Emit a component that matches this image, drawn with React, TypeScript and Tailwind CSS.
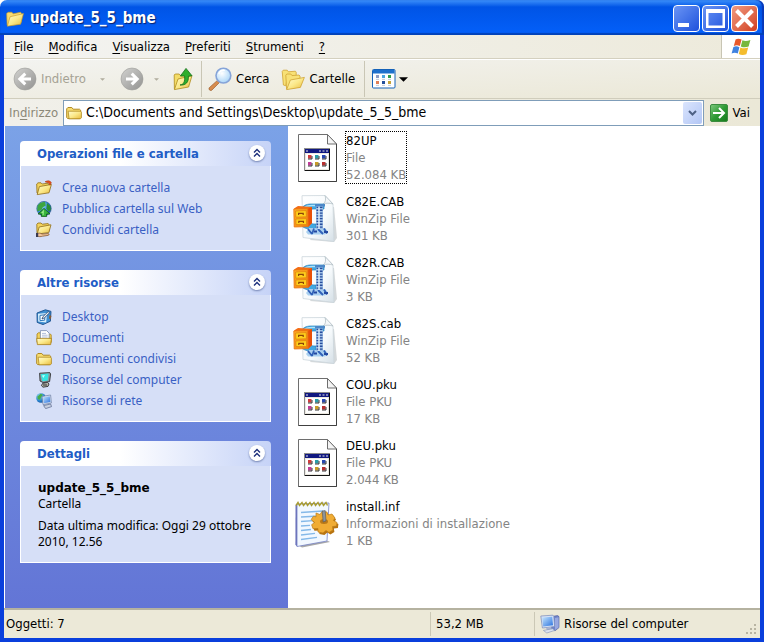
import type { ReactNode } from "react";

const menuItems = ["File", "Modifica", "Visualizza", "Preferiti", "Strumenti", "?"];

const files = [
  { name: "82UP", type: "File", size: "52.084 KB", icon: "app", focused: true },
  { name: "C82E.CAB", type: "WinZip File", size: "301 KB", icon: "zip" },
  { name: "C82R.CAB", type: "WinZip File", size: "3 KB", icon: "zip" },
  { name: "C82S.cab", type: "WinZip File", size: "52 KB", icon: "zip" },
  { name: "COU.pku", type: "File PKU", size: "17 KB", icon: "app" },
  { name: "DEU.pku", type: "File PKU", size: "2.044 KB", icon: "app" },
  { name: "install.inf", type: "Informazioni di installazione", size: "1 KB", icon: "inf" },
];

/* ---------- Shared gradients ---------- */

function Defs() {
  return (
    <svg className="absolute size-0" aria-hidden="true">
      <defs>
        <linearGradient id="folder" x1="0" y1="0" x2="1" y2="1">
          <stop offset="0" stopColor="#fffbd0" />
          <stop offset="0.5" stopColor="#fbe98a" />
          <stop offset="1" stopColor="#e8b93c" />
        </linearGradient>
        <linearGradient id="gray" x1="0" y1="0" x2="1" y2="1">
          <stop offset="0" stopColor="#d2d2d0" />
          <stop offset="1" stopColor="#929290" />
        </linearGradient>
        <linearGradient id="green" x1="0" y1="0" x2="1" y2="1">
          <stop offset="0" stopColor="#7fc97f" />
          <stop offset="0.5" stopColor="#2f9a35" />
          <stop offset="1" stopColor="#157a1c" />
        </linearGradient>
        <linearGradient id="screen" x1="0" y1="0" x2="1" y2="1">
          <stop offset="0" stopColor="#c5e6ff" />
          <stop offset="1" stopColor="#2b72dd" />
        </linearGradient>
        <linearGradient id="drawer" x1="0" y1="0" x2="1" y2="1">
          <stop offset="0" stopColor="#ffb02c" />
          <stop offset="1" stopColor="#f27c08" />
        </linearGradient>
        <linearGradient id="paper" x1="0" y1="0" x2="1" y2="1">
          <stop offset="0" stopColor="#ffffff" />
          <stop offset="0.6" stopColor="#f6fafc" />
          <stop offset="1" stopColor="#d5dfe6" />
        </linearGradient>
        <radialGradient id="lens" cx="0.4" cy="0.35" r="0.7">
          <stop offset="0" stopColor="#ffffff" />
          <stop offset="1" stopColor="#a5d3f7" />
        </radialGradient>
        <radialGradient id="globe" cx="0.35" cy="0.3" r="0.8">
          <stop offset="0" stopColor="#9adcf5" />
          <stop offset="0.6" stopColor="#2a86d0" />
          <stop offset="1" stopColor="#144a98" />
        </radialGradient>
      </defs>
    </svg>
  );
}

/* ---------- Small icons ---------- */

function OpenFolderIcon({ className = "size-4" }) {
  return (
    <svg viewBox="0 0 16 16" className={className}>
      <path d="M1 13.5 0.6 3.2 1.8 2h3.4l1.2 1.4 6.6-1.4.8 1.2-.4 8z" fill="#f8dc70" stroke="#c89a28" strokeWidth="0.6" />
      <path d="M3.6 6 15.5 3.2 13 12.6 1.2 14.4z" fill="url(#folder)" stroke="#c89a28" strokeWidth="0.6" />
    </svg>
  );
}

function ClosedFolderIcon() {
  return (
    <svg viewBox="0 0 16 16" className="size-4">
      <path d="M.7 12.6V3.8L1.9 2.5h3.9l1.4 1.7h6.3l1.2 1.1v7.3l-1 1H1.8z" fill="#f7dc70" stroke="#a87f14" strokeWidth="0.9" />
      <path d="M2.2 6.2h12.4l.8 1v5.6l-1 1H3z" fill="url(#folder)" stroke="#a87f14" strokeWidth="0.7" />
    </svg>
  );
}

function NewFolderIcon() {
  return (
    <svg viewBox="0 0 16 16" className="size-4">
      <path d="M1 13 .7 4 2 2.8h3l1.2 1.2 5.6-.8.9 1.2v7z" fill="#f3d35c" stroke="#8f6c16" strokeWidth="0.8" />
      <path d="M3.4 6.6 15.4 4.4 13 12.8 1.2 14.6z" fill="url(#folder)" stroke="#8f6c16" strokeWidth="0.8" />
      <path d="M9 1.8c2.6-1.6 5-1.2 6.4.8l-1.4 2.6-1.4-2.2z" fill="#e2511e" stroke="#a8320c" strokeWidth="0.5" />
    </svg>
  );
}

function WebPublishIcon() {
  return (
    <svg viewBox="0 0 16 16" className="size-4">
      <circle cx="8" cy="7.6" r="7.2" fill="url(#globe)" stroke="#164a80" strokeWidth="0.6" />
      <path d="M1.6 4.8C3 2 6 .8 9 1l.8 3.4-3 1.8-1.4 3-4.2 1z" fill="#3da53f" />
      <path d="m11 2 3.4 3 .4 4-2.4 1.6-2-3z" fill="#2b8e34" />
      <path d="M8 7.4 14 13h-3.4v2.6H5.4V13H2z" fill="#38b53c" stroke="#0d5a17" strokeWidth="0.8" />
      <path d="M8 8.6 5 12h1.6v2h1z" fill="#9be88d" />
    </svg>
  );
}

function ShareFolderIcon() {
  return (
    <svg viewBox="0 0 16 16" className="size-4">
      <path d="M1 11 .8 2.2 2 1h3l1.2 1.2 6-.6.7 1v7z" fill="#f3d35c" stroke="#8f6c16" strokeWidth="0.8" />
      <path d="M3.2 5 15 2.8l-2.2 7.8L1.2 12z" fill="url(#folder)" stroke="#8f6c16" strokeWidth="0.8" />
      <path d="M1 11.6c2-.8 3.4-.6 5 .4l6-.4c1.4 0 1.4 1.6 0 1.8l-5.4.8c-2 .6-3.6.6-5.6-.2z" fill="#f0c49a" stroke="#7a4a20" strokeWidth="0.7" />
      <path d="M0 11h2.2v4H0z" fill="#3a3a50" />
    </svg>
  );
}

function DesktopIcon() {
  return (
    <svg viewBox="0 0 16 16" className="size-4">
      <path d="m1 4 8.4-3.2 5.6 1.6-.6 9.8L7 15.6 1.2 13.4z" fill="#3f8fd2" stroke="#1a4f8c" strokeWidth="0.9" />
      <path d="m2 4.8 9-.8-.8 9.4-8-.8z" fill="#d8effc" />
      <path d="m4 6.4 5-.6-.4 5.4-4.6.4z" fill="#fff" stroke="#2f78ba" strokeWidth="1" />
      <path d="m6 10 1-2.4 5.2-5 1.4 1.2-5.2 5z" fill="#f0f6fb" stroke="#233c66" strokeWidth="0.8" />
      <path d="m13.6 6 1.8 1-.8 3.2-1.6-.6z" fill="#8a5a34" />
    </svg>
  );
}

function DocumentsIcon() {
  return (
    <svg viewBox="0 0 16 16" className="size-4">
      <path d="M1 12.4V4l1.4-1.2h3L6.6 4h7.8l.8 1v7.4z" fill="#f3d35c" stroke="#a87f14" strokeWidth="0.8" />
      <path d="M4.4.6h6.2l2.6 2.6v7.4H4.4z" fill="#fff" stroke="#7388b0" strokeWidth="0.8" />
      <path d="M6 3.4h4M6 5.2h5.6M6 7h5.6" stroke="#8fa4cc" strokeWidth="0.7" />
      <path d="M.7 8.4h14.8l-.8 6.2H1.4z" fill="url(#folder)" stroke="#a87f14" strokeWidth="0.8" />
    </svg>
  );
}

function MyComputerIcon() {
  return (
    <svg viewBox="0 0 16 16" className="size-4">
      <path d="M3.6 1.2 13.8.6l.8 1.4-1 7.6-6.4 1L4 9z" fill="#8e9aa0" stroke="#222" strokeWidth="0.8" />
      <path d="m4.6 2.2 8-.6-.8 6.8-5.4.8z" fill="#35e5e2" />
      <path d="m6 3.4 3-.4-1.6 3z" fill="#c4fffb" />
      <path d="m6.6 11.4 5-1 1.4 1.6-1 2.4-5 .8-1.6-1.6z" fill="#b6b6ac" stroke="#222" strokeWidth="0.8" />
      <path d="M7 13h4" stroke="#222" strokeWidth="0.9" />
    </svg>
  );
}

function NetworkIcon() {
  return (
    <svg viewBox="0 0 16 16" className="size-4">
      <circle cx="5" cy="5" r="4.8" fill="url(#globe)" />
      <path d="M1.4 3.4 4.6.8l2.4 1-2 2.4-.8 2.6-2.4-.6z" fill="#46ae48" />
      <path d="M6 3.4 14.6 2l.8 8-8.4 1.6z" fill="#d9e2f0" stroke="#6a7ca4" strokeWidth="0.7" />
      <path d="m7 4.2 6.8-1 .6 5.8-6.6 1.2z" fill="url(#screen)" />
      <path d="m7.6 12.6 7-1.6 1 2.6-6 2z" fill="#c8d0e0" stroke="#56658c" strokeWidth="0.7" />
    </svg>
  );
}

function StatusComputerIcon() {
  return (
    <svg viewBox="0 0 20 20" className="size-5">
      <path d="m12 2.4 5.6-.8 1.4 1v11l-4 3.2-3.4-1.4z" fill="#6f83c8" stroke="#45559c" strokeWidth="0.6" />
      <path d="m15 4 3.6-.8v10.2L15 16z" fill="#98a8e0" />
      <path d="m.8 2 12-.8 1 1.2.8 10.2L2.4 14z" fill="#d6e2f6" stroke="#7688b8" strokeWidth="0.7" />
      <path d="m2.2 3.4 10-.6.8 8.4-9.8 1.2z" fill="url(#screen)" />
      <path d="m6 14 5-.8 1 2.4-4.8 1z" fill="#a8b4d4" />
      <path d="m3.4 16.4 9.4-1.6 2 1.6-8 2.6z" fill="#dde3f0" stroke="#8090b4" strokeWidth="0.6" />
    </svg>
  );
}

/* ---------- Toolbar icons ---------- */

function RoundArrowIcon({ back = false }) {
  return (
    <svg viewBox="0 0 24 24" className="size-6">
      <circle cx="12" cy="12" r="11" fill="url(#gray)" stroke="#9c9c98" strokeWidth="0.6" />
      <path
        d={back ? "M18 12H7.5M12.3 6.6 6.8 12l5.5 5.4" : "M6 12h10.5M11.7 6.6l5.5 5.4-5.5 5.4"}
        fill="none"
        stroke="#fff"
        strokeWidth="3"
      />
    </svg>
  );
}

function UpFolderIcon() {
  return (
    <svg viewBox="0 0 20 24" className="h-6 w-5">
      <path d="M1.4 22 1.2 8l1-1h4l1.2 1.4h7.2l.8 1v9z" fill="#f3dc68" stroke="#b08c1c" strokeWidth="0.8" />
      <path d="M5 12 19 8.6 15.6 20 1.4 22.6z" fill="url(#folder)" stroke="#b08c1c" strokeWidth="0.8" />
      <path d="M7 18c4-.6 5-3.4 4.6-9H7.4L13 1.4l6 7.4-3.6.4c.4 6-2.6 9.4-8.4 8.8z" fill="#2eae2c" stroke="#14701a" strokeWidth="0.8" />
    </svg>
  );
}

function SearchIcon() {
  return (
    <svg viewBox="0 0 24 24" className="size-6">
      <path d="m9.4 13.4 2 2.2-7.6 7.6c-1.6 1-3.6-.8-2.6-2.4z" fill="#d88c4c" stroke="#9c6034" strokeWidth="0.7" />
      <circle cx="15.4" cy="8.6" r="7.4" fill="url(#lens)" stroke="#86a4d8" strokeWidth="1.6" />
      <path d="M10.8 7c1-3 3.6-4.2 6-3.6" fill="none" stroke="#fff" strokeWidth="1.4" />
    </svg>
  );
}

function FoldersIcon() {
  return (
    <svg viewBox="0 0 24 24" className="size-6">
      <path d="M2.4 18 1.2 4.4l1-1.2h4l1.2 1.6 7-.6.8 1v4l-9 2.2-1.4 7.4z" fill="#f8e176" stroke="#d0a434" strokeWidth="0.8" />
      <path d="m5.6 22-.8-13.8 1-1.2h4l1.2 1.6 7-.6 1 1v11z" fill="#f8e176" stroke="#d0a434" strokeWidth="0.8" />
      <path d="M9.4 13 23.4 10.4 19.4 20.4 5.6 22.6z" fill="url(#folder)" stroke="#d0a434" strokeWidth="0.8" />
    </svg>
  );
}

function ViewsIcon() {
  return (
    <svg viewBox="0 0 24 20" className="h-5 w-6">
      <rect x="0.5" y="0.5" width="22.5" height="18.5" rx="1" fill="#fff" stroke="#1562b8" />
      <rect x="1" y="1" width="21.5" height="3.5" fill="#1e70cc" />
      <rect x="4" y="6" width="3" height="3" fill="#8c9cc4" />
      <rect x="10" y="6" width="3" height="3" fill="#4aa4e0" />
      <rect x="16" y="6" width="3" height="3" fill="#2f9c4c" />
      <rect x="4" y="12" width="3" height="3" fill="#e08058" />
      <rect x="10" y="12" width="3" height="3" fill="#24509c" />
      <rect x="16" y="12" width="3" height="3" fill="#c4a238" />
      <path d="M4 10.4h3M10 10.4h3M16 10.4h3M4 16.4h3M10 16.4h3M16 16.4h3" stroke="#bcc4d4" strokeWidth="0.9" />
    </svg>
  );
}

function WindowsFlag() {
  return (
    <svg viewBox="0 0 20 18" className="h-[18px] w-5">
      <path d="M4.6 1.4c2-1 4-.8 6 .2L8.8 8C6.8 7 5 7 2.8 8z" fill="#e8582a" />
      <path d="M11.4 2.2c2.2 1 4.6 1 8-.2l-1.8 6.6c-2.8 1-5.2 1-7.8-.2z" fill="#78b83c" />
      <path d="M2.4 9c2.2-1 4-.8 6 .2l-1.6 6.4c-2-1.2-4-1.2-6.2-.2z" fill="#3f82e0" />
      <path d="M9.4 9.4c2.4 1.2 4.8 1.2 7.8.2L15.4 16.2c-2.8 1-5.2 1-7.6-.2z" fill="#f4bc2c" />
    </svg>
  );
}

function GoIcon() {
  return (
    <svg viewBox="0 0 18 18" className="size-[18px]">
      <rect x="0.5" y="0.5" width="17" height="17" rx="1.5" fill="url(#green)" stroke="#3c8c40" />
      <path d="M3 9h10.6M9 4l5 5-5 5" fill="none" stroke="#fff" strokeWidth="2" />
    </svg>
  );
}

function SmallArrow({ className = "" }) {
  return (
    <svg viewBox="0 0 10 5" className={className}>
      <path d="M0 0h10L5 5z" fill="currentColor" />
    </svg>
  );
}

/* ---------- File icons ---------- */

function AppFileIcon() {
  const dots = ["#d03c3c", "#2a9ca8", "#2848b0", "#c03c98", "#c89c28", "#b83030"];
  return (
    <svg viewBox="0 0 48 48" className="size-12">
      <path d="M5.5.5h29L43.5 10v37.5h-38z" fill="#fff" stroke="#6e6e6e" />
      <path d="M34.5.5V10h9z" fill="#f4f4f4" stroke="#6e6e6e" />
      <path d="M43.5 10v37.5h-38" fill="none" stroke="#404040" />
      <rect x="11.5" y="14.5" width="25" height="22" fill="#ece9e0" stroke="#8c8c8c" />
      <path d="M36.5 15v21.500H12" fill="none" stroke="#111" />
      <rect x="12" y="15" width="24" height="4" fill="#101880" />
      <path d="M13 17h2M26 17h2M29.5 17h2M33 17h2" stroke="#e8e8e8" />
      <rect x="13" y="20" width="22" height="15" fill="#fff" />
      {dots.map((color, i) => (
        <g key={color}>
          <rect x={15 + (i % 3) * 7} y={21 + Math.floor(i / 3) * 7} width="3.5" height="3.5" fill={color} />
          <path d={`M${15 + (i % 3) * 7} ${25 + Math.floor(i / 3) * 7}h4v-3`} fill="none" stroke="#222" strokeWidth="0.9" />
        </g>
      ))}
    </svg>
  );
}

function ZipFileIcon() {
  return (
    <svg viewBox="0 0 48 48" className="size-12">
      <path d="m37 12 4 0 3 31-3 4-24-2z" fill="#c3c9cc" opacity="0.7" />
      <path d="M9 .7 32 .5l8 8.5 1 37.5-31-4z" fill="url(#paper)" stroke="#ccd6dc" strokeWidth="0.8" />
      <path d="M32 .5c1.2 3.5.6 6.500-1.600 8.500 3-1.200 6-1 9.600 0z" fill="#f4f7f9" stroke="#b4c0c6" strokeWidth="0.8" />
      {/* clamp frame */}
      <path d="M8 15c1-4 5-6 10-6h13v5H20c-2 0-3 1-3 3v9c0 2 1 3 4 3h2v5h-5c-6 0-10-2-10-7z" fill="#42a8e0" stroke="#2684c0" strokeWidth="0.7" />
      <path d="M11 13c2-2 5-2.5 8-2.5h10" fill="none" stroke="#aee2fa" strokeWidth="1.5" />
      {/* screw and press plates */}
      <path d="M16 33h16l3 3.5-3 3H15l-2-2.5z" fill="#a8cff0" />
      <path d="m15 34 4 5M21 33.5l-2 5.5M25 34l5 5M31 33.5l3 5" stroke="#3060b8" strokeWidth="1.8" />
      <path d="M21 36.5h3M31 37h4" stroke="#2448a0" strokeWidth="2" />
      <path d="M26.5 9v25" stroke="#9fc0e6" strokeWidth="7" />
      <path d="M26.5 9v25" stroke="#284c9c" strokeWidth="6" strokeDasharray="1.3 1.5" />
      <path d="M26 10v24" stroke="#dcecfa" strokeWidth="1.5" />
      <path d="M22 9h10v2.5H22z" fill="#4c88c8" />
      {/* drawer */}
      <path d="m1 13.5 4-2.5 14 1v16l-3 3z" fill="#f46c14" />
      <path d="m14.5 14 4.5-2v16l-4 4z" fill="#e85008" />
      <path d="m.8 14 14-.6.4 18.2L1.2 32z" fill="url(#drawer)" stroke="#e87410" strokeWidth="0.8" />
      <path d="m2.6 16 10.6-.4.2 6.2-10.6.4zM2.8 24l10.6-.4.2 6H3z" fill="#ffd01c" stroke="#e08410" strokeWidth="0.8" />
      <path d="M5.6 20v-1.6h4.6V20M5.8 28v-1.6h4.6V28" fill="none" stroke="#8c4408" strokeWidth="1.2" />
    </svg>
  );
}

function InfFileIcon() {
  return (
    <svg viewBox="0 0 48 48" className="size-12">
      <path d="m5 45 30-4 2 1-28 5.5z" fill="#a8a8a8" />
      <path d="m4 4 32-1-2 38-30 5.5z" fill="#f2f8ff" stroke="#7480c4" strokeWidth="0.8" />
      <path d="M4 4v42.5l-1.600-1.700L2.500 5z" fill="#6c74bc" />
      <path d="M8 12.500 30 11M8 17l18-1M8 21.500l12-.8M8 26l9-.7M8 30.500l10-1M8 35l14-1.600M8 39.500l16-2.200" stroke="#84b8e8" strokeWidth="1.3" />
      <path d="m3 5.500 2-3 1.500 3 2.500-3 1.500 3 2.500-3 1.500 3 2.500-3 1.500 3 2.500-3 1.500 3 2.500-3 1.500 3 2.500-3 1.500 3 2.500-3 1.500 3" fill="none" stroke="#a89c30" strokeWidth="1.4" />
      <path d="m24 15 4 1 2-3 5 .5 1 3 4-1 3 4-1.600 2.500 4 2-.5 4-4 .6.500 3.400-4 2.500-3-2-3 2.500-5-1v-3.500l-5 .2-1.400-4 3-2.200-3.500-3 2.500-3.400 3 .8z" fill="#b87410" />
      <path d="m23 13 4 1.500 2-3 5 .5 1 3 4-1 3 4-1.600 2.500 3.600 2-.5 3.500-4 .6.500 3.400-4 2.500-3-2-3 2.500-5-1v-3.500l-5 .2-1.400-4 3-2.200-3.500-3 2.500-3.400 2.400.8z" fill="#f0ac34" stroke="#bc7c18" strokeWidth="0.7" />
      <ellipse cx="31" cy="21.5" rx="4" ry="2.5" fill="#b87818" />
      <path d="m29.2 11 3-.4.8 10.2-2.8 1.2z" fill="#8c949c" stroke="#50565c" strokeWidth="0.6" />
    </svg>
  );
}

function FileIcon({ kind }: { kind: string }) {
  if (kind === "zip") return <ZipFileIcon />;
  if (kind === "inf") return <InfFileIcon />;
  return <AppFileIcon />;
}

/* ---------- Sidebar ---------- */

function Panel({ title, children }: { title: string; children: ReactNode }) {
  return (
    <section>
      <div className="flex h-[25px] items-center justify-between rounded-t-[4px] bg-linear-to-r from-white from-40% to-[#c6d3f7] pl-[17px] pr-[6px]">
        <h2 className="font-['DejaVu_Sans_Condensed','DejaVu_Sans',sans-serif] text-[13px] font-bold text-[#215dc6]">{title}</h2>
        <button
          aria-label={`Comprimi ${title}`}
          className="mb-[2px] flex size-4 items-center justify-center rounded-full bg-white shadow-[0_1px_2px_#7080b0]"
        >
          <svg viewBox="0 0 8 10" className="h-[10px] w-2">
            <path d="m1 4.5 3-3 3 3M1 8.5l3-3 3 3" fill="none" stroke="#1c2f7c" strokeWidth="1.4" />
          </svg>
        </button>
      </div>
      <div className="border border-t-0 border-white bg-[#d6dff7]">{children}</div>
    </section>
  );
}

function LinkList({ links }: { links: { label: string; icon: ReactNode }[] }) {
  return (
    <ul className="pb-[10px] pl-[15px] pt-[11px]">
      {links.map((link) => (
        <li key={link.label}>
          <a href="#" className="flex h-[21px] items-center gap-[10px] text-[#3a5fc4]">
            {link.icon}
            {link.label}
          </a>
        </li>
      ))}
    </ul>
  );
}

function Sidebar() {
  return (
    <aside className="flex w-[283px] shrink-0 flex-col gap-[19px] bg-linear-to-b from-[#7ba2e7] to-[#6375d6] pl-[15px] pr-[17px] pt-[15px] font-['Noto_Sans',sans-serif] text-[12px]">
      <Panel title="Operazioni file e cartella">
        <LinkList
          links={[
            { label: "Crea nuova cartella", icon: <NewFolderIcon /> },
            { label: "Pubblica cartella sul Web", icon: <WebPublishIcon /> },
            { label: "Condividi cartella", icon: <ShareFolderIcon /> },
          ]}
        />
      </Panel>
      <Panel title="Altre risorse">
        <LinkList
          links={[
            { label: "Desktop", icon: <DesktopIcon /> },
            { label: "Documenti", icon: <DocumentsIcon /> },
            { label: "Documenti condivisi", icon: <ClosedFolderIcon /> },
            { label: "Risorse del computer", icon: <MyComputerIcon /> },
            { label: "Risorse di rete", icon: <NetworkIcon /> },
          ]}
        />
      </Panel>
      <Panel title="Dettagli">
        <div className="pb-3 pl-[17px] pr-3 pt-[14px] leading-4 text-black">
          <p className="font-['DejaVu_Sans',sans-serif] font-bold">update_5_5_bme</p>
          <p>Cartella</p>
          <p className="mt-[6px]">Data ultima modifica: Oggi 29 ottobre 2010, 12.56</p>
        </div>
      </Panel>
    </aside>
  );
}

/* ---------- Window chrome ---------- */

function TitleBar() {
  const button = "flex size-[27px] items-center justify-center rounded-[4px] border border-white";
  return (
    <header className="flex h-[35px] items-center rounded-t-[7px] bg-linear-to-b from-[#3c90fa] via-[#0054e6] via-20% to-[#0460fa] px-[6px] pt-[2px] shadow-[inset_0_-2px_1px_#0242b8,inset_-2px_0_1px_#0838b8]">
      <OpenFolderIcon className="size-[18px]" />
      <h1 className="ml-[6px] grow text-[15px] font-bold text-white [text-shadow:1px_1px_1px_#0a1f6a]">update_5_5_bme</h1>
      <div className="flex gap-[2px]">
        <button aria-label="Riduci a icona" className={`${button} bg-linear-to-br from-[#6a94f4] to-[#1f4fdc]`}>
          <svg viewBox="0 0 25 25" className="size-[25px]">
            <path d="M4 17h11v4H4z" fill="#fff" />
          </svg>
        </button>
        <button aria-label="Ingrandisci" className={`${button} bg-linear-to-br from-[#6a94f4] to-[#1f4fdc]`}>
          <svg viewBox="0 0 25 25" className="size-[25px]">
            <path d="M3 3h19v19H3zM5.5 7v12.500h14V7z" fill="#fff" fillRule="evenodd" />
          </svg>
        </button>
        <button aria-label="Chiudi" className={`${button} bg-linear-to-br from-[#f09a80] to-[#d03c1c]`}>
          <svg viewBox="0 0 25 25" className="size-[25px]">
            <path d="m4.5 4.5 16 16m0-16-16 16" stroke="#fff" strokeWidth="4" />
          </svg>
        </button>
      </div>
    </header>
  );
}

function MenuBar() {
  return (
    <nav className="flex h-6 border-b border-[#d4d0bf] bg-linear-to-r from-[#f3f3f1] to-[#edeadb]">
      <div className="flex grow items-center gap-[15px] pl-[10px]">
        {menuItems.map((item) => (
          <button key={item}>
            <span className="underline underline-offset-2">{item[0]}</span>
            {item.slice(1)}
          </button>
        ))}
      </div>
      <div className="flex w-[39px] items-center justify-center border-l border-[#c8c5b4] bg-white">
        <WindowsFlag />
      </div>
    </nav>
  );
}

function Toolbar() {
  return (
    <div className="flex h-10 items-center border-b border-[#d0cdbc] border-t border-t-white bg-linear-to-br from-[#f3f3f0] to-[#ebe8d7] pl-[9px]">
      <button disabled className="flex items-center gap-1 text-[#a5a294]">
        <RoundArrowIcon back />
        Indietro
      </button>
      <SmallArrow className="ml-[14px] h-[3px] w-[5px] text-[#b0ad9e]" />
      <button disabled aria-label="Avanti" className="ml-[15px]">
        <RoundArrowIcon />
      </button>
      <SmallArrow className="ml-[10px] h-[3px] w-[5px] text-[#b0ad9e]" />
      <button aria-label="Cartella superiore" className="ml-[14px]">
        <UpFolderIcon />
      </button>
      <div className="ml-2 h-9 w-px bg-[#c9c6b5]" />
      <button className="ml-[6px] flex items-center gap-1">
        <SearchIcon />
        Cerca
      </button>
      <button className="ml-3 flex items-center gap-1">
        <FoldersIcon />
        Cartelle
      </button>
      <div className="ml-[9px] h-9 w-px bg-[#c9c6b5]" />
      <button aria-label="Visualizza" className="ml-[7px] flex items-center gap-[3px]">
        <ViewsIcon />
        <SmallArrow className="h-[5px] w-[9px] text-black" />
      </button>
    </div>
  );
}

function AddressBar() {
  return (
    <form className="flex h-[27px] items-center bg-linear-to-r from-[#f1f0ea] to-[#ebe8d7] pl-[5px] pr-[10px]">
      <label htmlFor="address" className="w-[54px] text-[#8b8878]">
        In<span className="underline underline-offset-2">d</span>irizzo
      </label>
      <div className="flex h-[26px] grow items-center border border-[#7f9db9] bg-white pl-[2px] pr-px">
        <ClosedFolderIcon />
        <input
          id="address"
          defaultValue="C:\Documents and Settings\Desktop\update_5_5_bme"
          className="ml-1 min-w-0 grow text-[14px] outline-none"
        />
        <button
          type="button"
          aria-label="Mostra indirizzi"
          className="flex h-[22px] w-[19px] items-center justify-center rounded-[2px] bg-linear-to-br from-[#dbe5fd] to-[#b2c6f5]"
        >
          <svg viewBox="0 0 9 6" className="h-[6px] w-[9px]">
            <path d="m1 1 3.5 3.5L8 1" fill="none" stroke="#4d6185" strokeWidth="2" />
          </svg>
        </button>
      </div>
      <button type="button" className="ml-[6px] flex items-center gap-[5px]">
        <GoIcon />
        Vai
      </button>
    </form>
  );
}

function StatusBar() {
  return (
    <footer className="flex h-[30px] items-center border-t-2 border-[#b5b2a0] bg-[#ece9d8]">
      <span className="grow pl-[2px]">Oggetti: 7</span>
      <span className="flex h-6 w-[104px] items-center border-l border-[#cbc8b6] pl-[5px]">53,2 MB</span>
      <span className="flex h-6 w-[226px] items-center gap-1 border-l border-[#cbc8b6] pl-[5px]">
        <StatusComputerIcon />
        <span className="grow">Risorse del computer</span>
        <svg viewBox="0 0 12 12" className="mr-[3px] size-3 self-end">
          <path d="M9 1h2M5 5h2M9 5h2M1 9h2M5 9h2M9 9h2" stroke="#b8b4a2" strokeWidth="2" />
        </svg>
      </span>
    </footer>
  );
}

export default function App() {
  return (
    <div className="flex min-h-screen flex-col bg-white font-['DejaVu_Sans_Condensed','DejaVu_Sans',sans-serif] text-[13px] text-black">
      <Defs />
      <TitleBar />
      <div className="flex grow flex-col border-x-4 border-b-4 border-[#0a3fdc]">
        <MenuBar />
        <Toolbar />
        <AddressBar />
        <main className="flex grow bg-white pl-px">
          <Sidebar />
          <ul className="flex grow flex-col gap-2 pl-[5px] pt-[5px]">
            {files.map((file) => (
              <li key={file.name} className="flex items-start gap-1">
                <div className="pt-[3px]">
                  <FileIcon kind={file.icon} />
                </div>
                <div className={`border border-dotted leading-[17px] ${file.focused ? "border-black" : "border-transparent"}`}>
                  <p>{file.name}</p>
                  <p className="text-[#848484]">{file.type}</p>
                  <p className="text-[#848484]">{file.size}</p>
                </div>
              </li>
            ))}
          </ul>
        </main>
        <StatusBar />
      </div>
    </div>
  );
}
